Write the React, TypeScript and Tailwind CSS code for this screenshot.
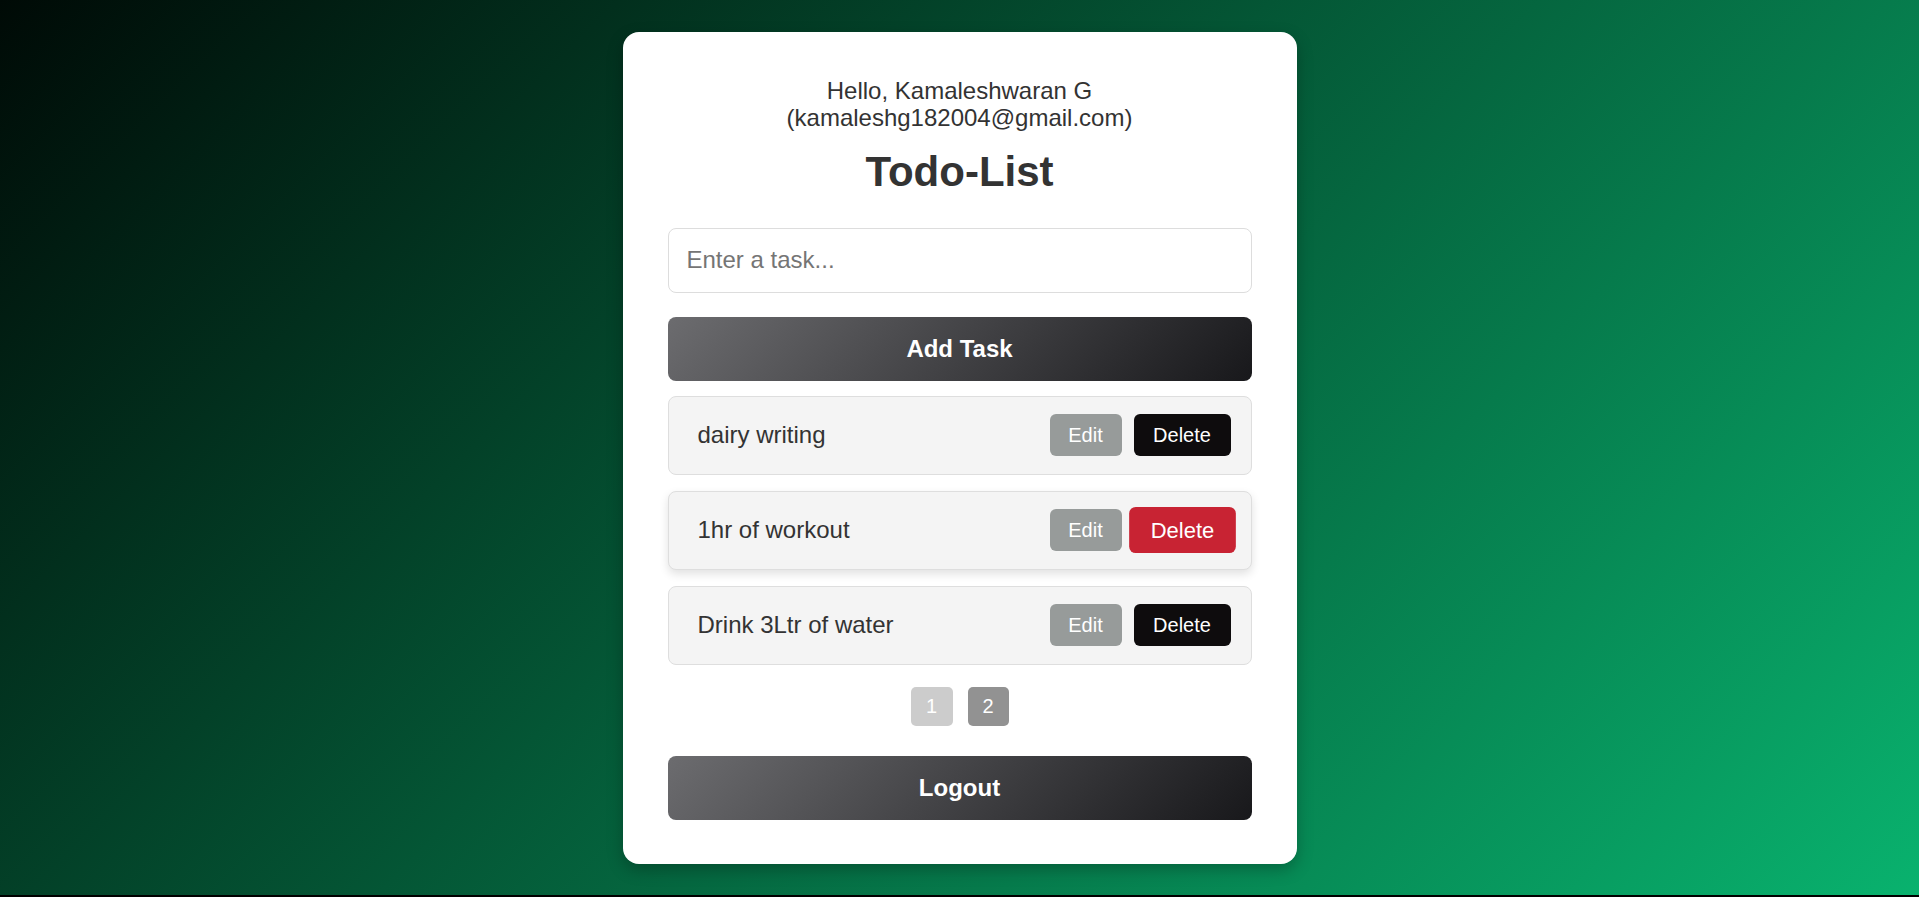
import React from "react";

type Task = { id: number; text: string; hovered?: boolean };

const tasks: Task[] = [
  { id: 1, text: "dairy writing" },
  { id: 2, text: "1hr of workout", hovered: true },
  { id: 3, text: "Drink 3Ltr of water" },
];

export default function App() {
  return (
    <div className="min-h-[897px] bg-black font-['Liberation_Sans',Arial,sans-serif]">
      <div className="h-[895px] flex items-center justify-center bg-[linear-gradient(135deg,#000a06_0%,#09b26e_100%)]">
        <div className="w-[674px] bg-white rounded-[16px] px-[45px] pt-[45px] pb-[44px] shadow-[0_6px_16px_rgba(0,0,0,0.25)] text-[#333]">
          <p className="text-center text-[24px] leading-[27px]">
            Hello, Kamaleshwaran G (kamaleshg182004@gmail.com)
          </p>
          <h1 className="mt-[17px] text-center text-[42px] font-bold leading-[47px]">Todo-List</h1>
          <input
            className="mt-[33px] block w-full h-[65px] border border-[#dddddd] rounded-[8px] px-[18px] text-[24px] text-[#333] placeholder:text-[#757575] outline-none"
            placeholder="Enter a task..."
          />
          <button className="mt-[24px] block w-full h-[64px] rounded-[8px] bg-[linear-gradient(135deg,#6c6c6f_0%,#18181b_100%)] text-white text-[24px] font-bold">
            Add Task
          </button>
          <ul className="mt-[15px] flex flex-col gap-[16px]">
            {tasks.map((t) => (
              <li
                key={t.id}
                className={
                  t.hovered
                    ? "h-[79px] flex items-center justify-between bg-[#f4f4f4] border border-[#dedede] rounded-[8px] pl-[29px] pr-[20px] shadow-[0_4px_10px_rgba(0,0,0,0.12)]"
                    : "h-[79px] flex items-center justify-between bg-[#f4f4f4] border border-[#dedede] rounded-[8px] pl-[29px] pr-[20px]"
                }
              >
                <span className="text-[24px] text-[#333]">{t.text}</span>
                <div className="flex items-center gap-[12px]">
                  <button className="w-[72px] h-[42px] rounded-[6px] bg-[#979b9a] text-white text-[20px]">Edit</button>
                  <button
                    className={
                      t.hovered
                        ? "w-[97px] h-[42px] rounded-[6px] bg-[#c82333] text-white text-[20px] scale-110"
                        : "w-[97px] h-[42px] rounded-[6px] bg-[#0e0c0d] text-white text-[20px]"
                    }
                  >
                    Delete
                  </button>
                </div>
              </li>
            ))}
          </ul>
          <div className="mt-[22px] flex justify-center gap-[15px]">
            <button className="w-[42px] h-[39px] rounded-[5px] bg-[#cccccc] text-white text-[20px]">1</button>
            <button className="w-[41px] h-[39px] rounded-[5px] bg-[#929292] text-white text-[20px]">2</button>
          </div>
          <button className="mt-[30px] block w-full h-[64px] rounded-[8px] bg-[linear-gradient(135deg,#6c6c6f_0%,#18181b_100%)] text-white text-[24px] font-bold">
            Logout
          </button>
        </div>
      </div>
    </div>
  );
}
